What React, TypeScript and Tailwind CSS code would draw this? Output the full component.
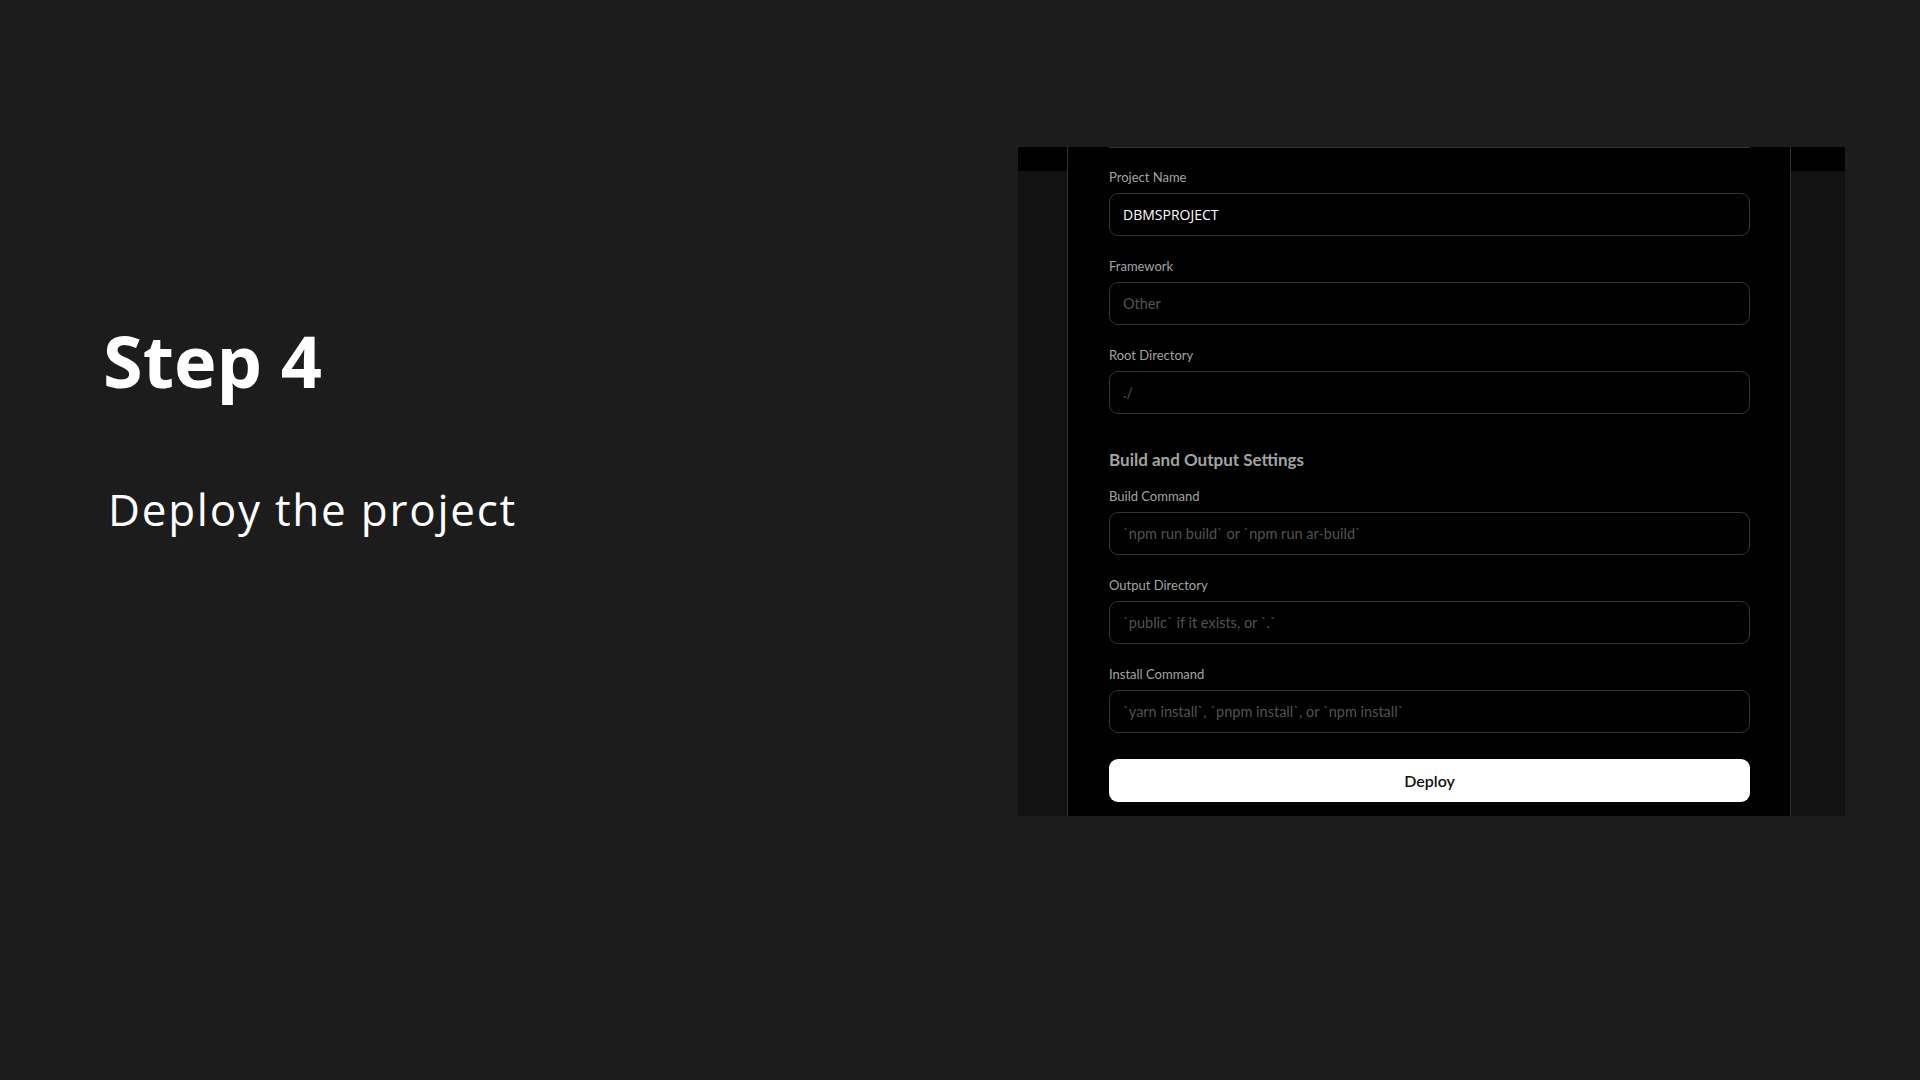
import React from "react";

function Field({ label, value, placeholder }: { label: string; value?: string; placeholder?: string }) {
  return (
    <div className="flex flex-col">
      <div className="text-[13px] leading-[18px] text-[#a3a3a3]">{label}</div>
      <div className="mt-[7px] h-[43px] w-[641px] rounded-[9px] border border-[#333333] flex items-center px-[13px]">
        {value ? (
          <span className="text-[14px] text-white" style={{ fontFamily: '"Open Sans", sans-serif' }}>{value}</span>
        ) : (
          <span className="text-[14.5px] text-[#525252]">{placeholder}</span>
        )}
      </div>
    </div>
  );
}

export default function App() {
  return (
    <div className="w-[1920px] h-[1080px] bg-[#1c1c1c] flex overflow-hidden">
      <div className="w-[1018px] pl-[103px] pt-[324px] flex flex-col" style={{ fontFamily: '"Open Sans", sans-serif' }}>
        <div className="text-[72px] leading-none font-bold text-white">Step 4</div>
        <div className="mt-[91px] ml-[5px] text-[44px] leading-none text-white tracking-[0.04em]">Deploy the project</div>
      </div>
      <div className="pt-[147px]">
        <div className="w-[828px] h-[669px] flex" style={{ fontFamily: 'Lato, "Open Sans", sans-serif' }}>
          <div className="w-[49px] bg-[#121212] flex flex-col">
            <div className="h-[24px] bg-black" />
          </div>
          <div className="w-[724px] bg-black border-x border-[#2f2f2f] pl-[41px] flex flex-col">
            <div className="h-px w-[641px] bg-[#333333] rounded-b" />
            <div className="mt-[20px] flex flex-col gap-[21px]">
              <Field label="Project Name" value="DBMSPROJECT" />
              <Field label="Framework" placeholder="Other" />
              <Field label="Root Directory" placeholder="./" />
            </div>
            <div className="mt-[34px] text-[17px] leading-[24px] font-bold text-[#a3a3a3]">Build and Output Settings</div>
            <div className="mt-[15px] flex flex-col gap-[21px]">
              <Field label="Build Command" placeholder="`npm run build` or `npm run ar-build`" />
              <Field label="Output Directory" placeholder="`public` if it exists, or `.`" />
              <Field label="Install Command" placeholder="`yarn install`, `pnpm install`, or `npm install`" />
            </div>
            <div className="mt-[26px] h-[43px] w-[641px] rounded-[9px] bg-white flex items-center justify-center text-[16px] font-semibold text-[#111]">
              Deploy
            </div>
          </div>
          <div className="w-[54px] bg-[#121212] flex flex-col">
            <div className="h-[24px] bg-black" />
          </div>
        </div>
      </div>
    </div>
  );
}
